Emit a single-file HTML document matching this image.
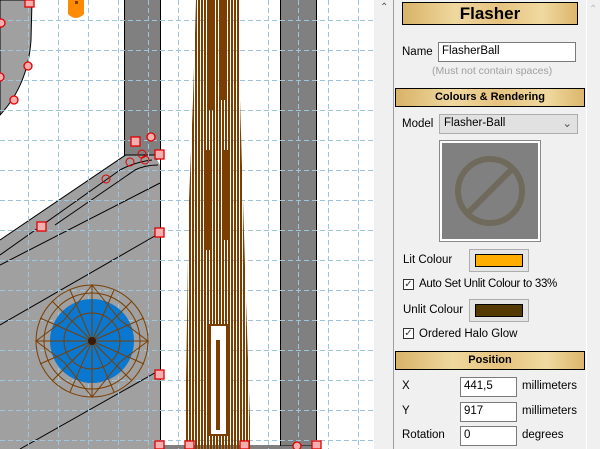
<!DOCTYPE html>
<html><head><meta charset="utf-8"><style>
body{margin:0;width:600px;height:449px;overflow:hidden;background:#fff;font-family:"Liberation Sans",Tahoma,sans-serif;font-size:11px;color:#000;position:relative}
.a{position:absolute}
.hdr{position:absolute;background:linear-gradient(90deg,#d9b268,#efd89e 30%,#e6c27e 55%,#f0d9a0 80%,#dcb66c);border:1px solid #000;text-align:center;font-weight:bold}
.inp{position:absolute;background:#fff;border:1px solid #7a7a7a;box-sizing:border-box;padding:2px 3px;font-size:11.5px}
.btn{position:absolute;background:#e5e5e5;border:1px solid #adadad;box-sizing:border-box}
.btn div{position:absolute;left:5px;top:4px;right:5px;bottom:4px;border:1px solid #000}
.cb{position:absolute;width:11px;height:11px;border:1px solid #333;background:#fff;box-sizing:border-box;font-size:10px;line-height:9px;text-align:center;color:#333}
.l{position:absolute;font-size:11.5px}
</style></head><body>
<svg class="a" style="left:0;top:0" width="374" height="449">
<defs>
<pattern id="st" width="3" height="10" patternUnits="userSpaceOnUse"><rect width="2" height="10" fill="#7a3e00"/></pattern>
</defs>
<rect width="374" height="449" fill="#fff"/>
<path d="M0,0 L32,0 L31,40 Q28,85 0,115 Z" fill="#a0a0a0" stroke="#000" stroke-width="1"/>
<path d="M0,240 L130,152 Q150,140 157,160 L160,165 L160,449 L0,449 Z" fill="#a0a0a0"/>
<path d="M0,240 L130,152 Q150,140 157,160" fill="none" stroke="#000"/>
<path d="M0,255 L120,170 Q135,162 152,160" fill="none" stroke="#000"/>
<path d="M55,225 L135,170 Q145,165 158,165" fill="none" stroke="#000"/>
<path d="M0,265 L160,183" fill="none" stroke="#000"/>
<path d="M0,325 L160,233" fill="none" stroke="#000"/>
<path d="M20,449 L160,370" fill="none" stroke="#000"/>
<rect x="124.5" y="-1" width="36" height="156" fill="#808080" stroke="#000"/>
<rect x="280.5" y="-1" width="36" height="447" fill="#808080" stroke="#000"/>
<path d="M160.5,155V446H280" fill="none" stroke="#000"/>
<rect x="160" y="446" width="157" height="3" fill="#808080"/>
<g stroke="#9fc5dd" stroke-dasharray="5,3" stroke-width="1">
<path d="M28.5,0V449M58.5,0V449M88.5,0V449M118.5,0V449M148.5,0V449M178.5,0V449M208.5,0V449M238.5,0V449M268.5,0V449M298.5,0V449M328.5,0V449M358.5,0V449"/>
<path d="M0,20.5H374M0,50.5H374M0,80.5H374M0,110.5H374M0,140.5H374M0,170.5H374M0,200.5H374M0,230.5H374M0,260.5H374M0,290.5H374M0,320.5H374M0,350.5H374M0,380.5H374M0,410.5H374M0,440.5H374"/>
</g>
<path d="M196,0 L239,0 L240,100 L243,200 L246,300 L250,420 L250,449 L185,449 L186,380 L189,200 L193,100 Z" fill="url(#st)"/>
<rect x="208" y="0" width="6" height="110" fill="#7a3e00"/>
<rect x="221" y="0" width="5" height="100" fill="#7a3e00"/>
<rect x="206" y="150" width="6" height="100" fill="#7a3e00"/>
<rect x="222" y="150" width="6" height="90" fill="#7a3e00"/>
<rect x="210" y="325" width="17" height="110" fill="#fff" stroke="#7a3e00" stroke-width="2"/>
<rect x="216" y="340" width="4" height="90" fill="#7a3e00"/>
<circle cx="92" cy="341" r="56" fill="none" stroke="#7a3e00"/>
<circle cx="92" cy="341" r="42" fill="#0a78d0"/>
<g stroke="#7a3e00" stroke-width="1" fill="none">
<circle cx="92" cy="341" r="48"/><circle cx="92" cy="341" r="28"/>
<path d="M92,285V397M36,341H148M52,301L132,381M52,381L132,301M70,290L114,392M70,392L114,290M40,318L144,364M40,364L144,318"/>
<path d="M92,285L120,320L148,341L120,362L92,397L64,362L36,341L64,320Z"/>
</g>
<circle cx="92" cy="341" r="4" fill="#3a1a00"/>
<g fill="#f4b0b0" stroke="#e00000" stroke-width="1.3">
<rect x="25" y="0" width="9" height="7"/>
<rect x="131" y="137" width="9" height="9"/><rect x="155" y="150" width="9" height="9"/>
<rect x="37" y="222" width="9" height="9"/><rect x="155" y="228" width="9" height="9"/>
<rect x="155" y="370" width="9" height="9"/>
<rect x="155" y="441" width="9" height="8"/><rect x="185" y="441" width="9" height="8"/><rect x="240" y="441" width="9" height="8"/><rect x="312" y="441" width="9" height="8"/>
<circle cx="28" cy="66" r="4"/><circle cx="14" cy="100" r="4"/><circle cx="0" cy="77" r="4"/><circle cx="1" cy="23" r="4"/>
<circle cx="151" cy="137" r="4"/><circle cx="297" cy="446" r="4"/>
</g>
<g fill="none" stroke="#e00000"><circle cx="142" cy="154" r="4"/><circle cx="130" cy="162" r="4"/><circle cx="106" cy="179" r="4"/><circle cx="145" cy="160" r="4"/></g>
<path d="M68,0 L84,0 L84,14 Q76,22 68,14 Z" fill="#ff8a00"/>
<rect x="75" y="1" width="3" height="3" fill="#7a3e00"/>
</svg>
<div class="a" style="left:374px;top:0;width:226px;height:449px;background:#f0f0f0"></div>
<div class="a" style="left:393px;top:0;width:1px;height:449px;background:#a0a0a0"></div>
<div class="a" style="left:586px;top:0;width:1px;height:449px;background:#fff"></div>
<div class="a" style="left:380px;top:2px;font-size:10px;color:#555">&#8963;</div>
<div class="a" style="left:589px;top:4px;font-size:10px;color:#bbb">&#8963;</div>
<div class="hdr" style="left:402px;top:2px;width:174px;height:21px;font-size:17px;line-height:21px">Flasher</div>
<div class="l" style="left:402px;top:46px">Name</div>
<div class="inp" style="left:438px;top:42px;width:138px;height:20px">FlasherBall</div>
<div class="a" style="left:432px;top:65px;font-size:10.5px;color:#a0a0a0">(Must not contain spaces)</div>
<div class="hdr" style="left:395px;top:88px;width:188px;height:17px;font-size:11px;line-height:17px">Colours &amp; Rendering</div>
<div class="l" style="left:402px;top:118px">Model</div>
<div class="a" style="left:439px;top:114px;width:139px;height:20px;border:1px solid #adadad;background:#e1e1e1;box-sizing:border-box;padding:2px 4px;font-size:11.5px">Flasher-Ball<span style="position:absolute;right:5px;top:1px;color:#555">&#8964;</span></div>
<div class="a" style="left:439px;top:140px;width:102px;height:102px;border:1px solid #888;background:#fff;box-sizing:border-box"><div style="position:absolute;left:2px;top:2px;width:96px;height:96px;background:#808080">
<svg width="96" height="96"><circle cx="48" cy="48" r="32" fill="none" stroke="#706a5c" stroke-width="6"/><path d="M26,70L70,26" stroke="#706a5c" stroke-width="6"/></svg></div></div>
<div class="l" style="left:403px;top:254px">Lit Colour</div>
<div class="btn" style="left:469px;top:249px;width:60px;height:23px"><div style="background:#ffae00"></div></div>
<div class="cb" style="left:403px;top:279px">&#10003;</div>
<div class="l" style="left:419px;top:278px;letter-spacing:-0.3px">Auto Set Unlit Colour to 33%</div>
<div class="l" style="left:403px;top:304px">Unlit Colour</div>
<div class="btn" style="left:469px;top:299px;width:60px;height:23px"><div style="background:#553a00"></div></div>
<div class="cb" style="left:403px;top:328px">&#10003;</div>
<div class="l" style="left:419px;top:328px">Ordered Halo Glow</div>
<div class="hdr" style="left:395px;top:351px;width:188px;height:17px;font-size:11px;line-height:17px">Position</div>
<div class="l" style="left:402px;top:380px">X</div>
<div class="inp" style="left:460px;top:377px;width:57px;height:20px">441,5</div>
<div class="l" style="left:522px;top:380px">millimeters</div>
<div class="l" style="left:402px;top:405px">Y</div>
<div class="inp" style="left:460px;top:402px;width:57px;height:20px">917</div>
<div class="l" style="left:522px;top:405px">millimeters</div>
<div class="l" style="left:402px;top:429px">Rotation</div>
<div class="inp" style="left:460px;top:426px;width:57px;height:20px">0</div>
<div class="l" style="left:522px;top:429px">degrees</div>
</body></html>
